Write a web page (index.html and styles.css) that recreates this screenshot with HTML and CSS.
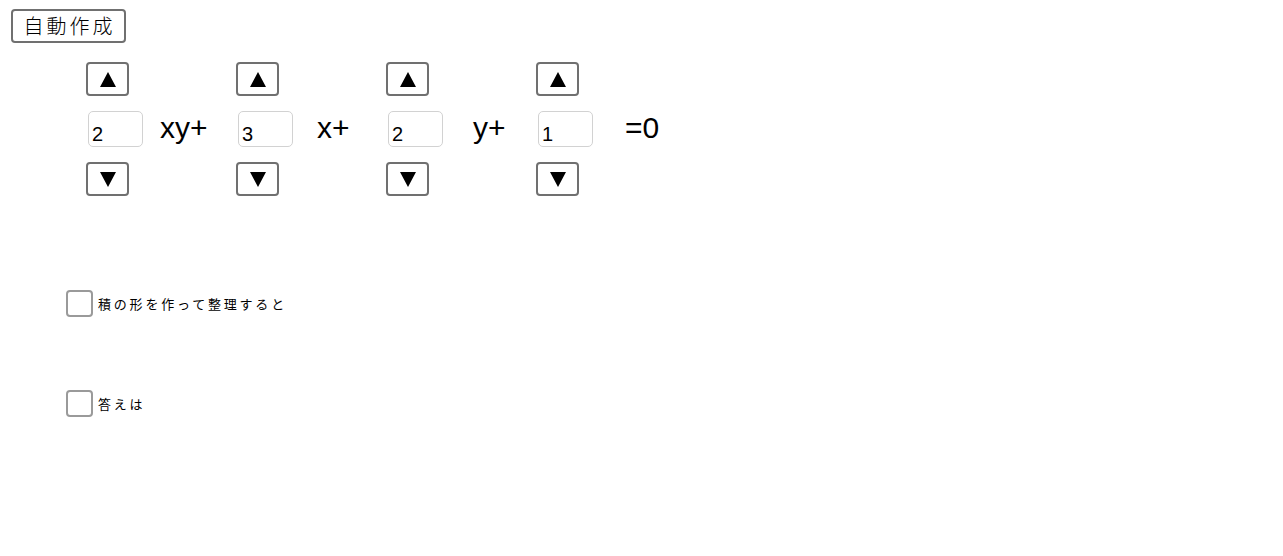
FILE: index.html
```html
<!DOCTYPE html>
<html lang="ja">
<head>
<meta charset="utf-8">
<title>自動作成</title>
<link rel="stylesheet" href="styles.css">
</head>
<body>
<div class="page">
  <button class="auto-btn">自動作成</button>

  <div class="equation">
    <button class="step c1 up"><svg viewBox="0 0 16 15" width="16" height="15"><polygon points="8,0 16,15 0,15"/></svg></button>
    <input class="coef c1" type="text" value="2">
    <button class="step c1 down"><svg viewBox="0 0 16 15" width="16" height="15"><polygon points="0,0 16,0 8,15"/></svg></button>
    <span class="term t1">xy+</span>

    <button class="step c2 up"><svg viewBox="0 0 16 15" width="16" height="15"><polygon points="8,0 16,15 0,15"/></svg></button>
    <input class="coef c2" type="text" value="3">
    <button class="step c2 down"><svg viewBox="0 0 16 15" width="16" height="15"><polygon points="0,0 16,0 8,15"/></svg></button>
    <span class="term t2">x+</span>

    <button class="step c3 up"><svg viewBox="0 0 16 15" width="16" height="15"><polygon points="8,0 16,15 0,15"/></svg></button>
    <input class="coef c3" type="text" value="2">
    <button class="step c3 down"><svg viewBox="0 0 16 15" width="16" height="15"><polygon points="0,0 16,0 8,15"/></svg></button>
    <span class="term t3">y+</span>

    <button class="step c4 up"><svg viewBox="0 0 16 15" width="16" height="15"><polygon points="8,0 16,15 0,15"/></svg></button>
    <input class="coef c4" type="text" value="1">
    <button class="step c4 down"><svg viewBox="0 0 16 15" width="16" height="15"><polygon points="0,0 16,0 8,15"/></svg></button>
    <span class="term t4">=0</span>
  </div>

  <label class="check-row first"><input type="checkbox" class="box"><span class="check-label">積の形を作って整理すると</span></label>
  <label class="check-row second"><input type="checkbox" class="box"><span class="check-label">答えは</span></label>
</div>
</body>
</html>
```

FILE: styles.css
```css
html, body {
  margin: 0;
  padding: 0;
  background: #ffffff;
}

.page {
  display: flex;
  flex-direction: column;
  align-items: flex-start;
  padding-top: 9px;
  font-family: "Liberation Sans", Arial, sans-serif;
  color: #000;
}

.auto-btn {
  margin-left: 11px;
  width: 115px;
  height: 34px;
  box-sizing: border-box;
  border: 2px solid #707070;
  border-radius: 4px;
  background: #fff;
  padding: 0 0 0 2px;
  font-family: "Noto Sans CJK JP", sans-serif;
  font-size: 20px;
  font-weight: 300;
  letter-spacing: 3px;
  line-height: 1;
  color: #000;
}

.equation {
  margin-top: 19px;
  margin-left: 86px;
  display: grid;
  grid-template-columns: 74px 76px 81px 69px 87px 63px 89px auto;
  grid-template-rows: 34px 36px 34px;
  row-gap: 15px;
}

.c1 { grid-column: 1; }
.c2 { grid-column: 3; }
.c3 { grid-column: 5; }
.c4 { grid-column: 7; }
.t1 { grid-column: 2; }
.t2 { grid-column: 4; }
.t3 { grid-column: 6; }
.t4 { grid-column: 8; }

.up { grid-row: 1; }
.down { grid-row: 3; }
.coef { grid-row: 2; }
.term { grid-row: 2; }

.step {
  width: 43px;
  height: 34px;
  box-sizing: border-box;
  border: 2px solid #707070;
  border-radius: 4px;
  background: #fff;
  padding: 0;
  display: flex;
  align-items: center;
  justify-content: center;
}

.step svg {
  display: block;
  fill: #000;
}

.coef {
  margin-left: 2px;
  width: 55px;
  height: 36px;
  box-sizing: border-box;
  border: 1px solid #d2d2d2;
  border-radius: 5px;
  padding: 11px 2px 0 3px;
  font-family: "Liberation Sans", Arial, sans-serif;
  font-size: 20px;
  color: #000;
  background: #fff;
  outline: none;
}

.term {
  font-size: 30px;
  line-height: 34px;
  white-space: nowrap;
}

.check-row {
  margin-left: 66px;
  display: flex;
  align-items: center;
  gap: 5px;
}

.check-row.first { margin-top: 94px; }
.check-row.second { margin-top: 73px; }

.box {
  appearance: none;
  -webkit-appearance: none;
  margin: 0;
  width: 27px;
  height: 27px;
  box-sizing: border-box;
  border: 2px solid #9a9a9a;
  border-radius: 4px;
  background: #fff;
}

.check-label {
  font-family: "Noto Sans CJK JP", sans-serif;
  font-size: 13px;
  letter-spacing: 2.8px;
  color: #000;
}
```
